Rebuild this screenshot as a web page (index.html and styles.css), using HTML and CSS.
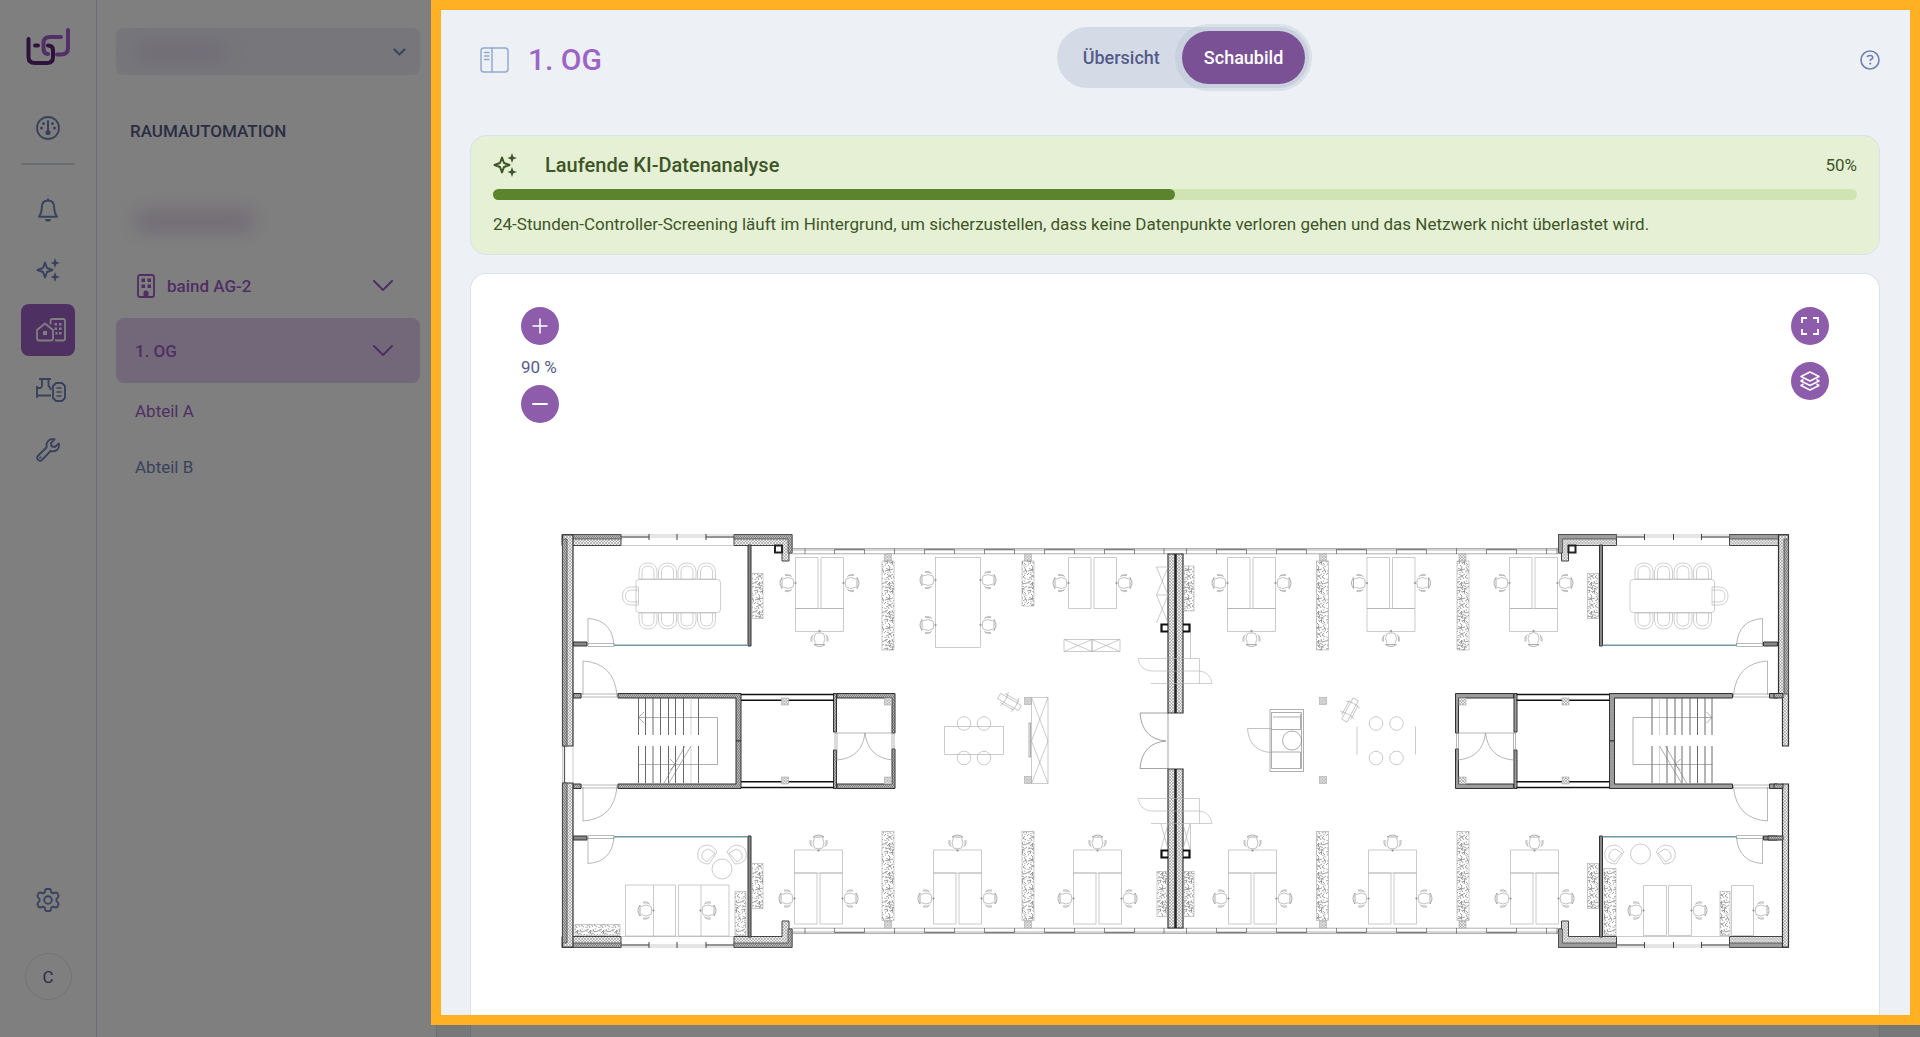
FILE: index.html
```html
<!DOCTYPE html>
<html lang="de">
<head>
  <meta charset="utf-8">
  <title>1. OG - Schaubild</title>
  <link rel="stylesheet" href="styles.css">
</head>
<body>
  <svg class="defs" width="0" height="0">
    <symbol id="sparkles" viewBox="0 0 24 24">
      <path d="M9 4.500 L11 10 L16.500 12 L11 14 L9 19.500 L7 14 L1.500 12 L7 10 Z" fill="none" stroke="currentColor" stroke-width="2" stroke-linejoin="round"/>
      <path d="M19 0 L20.300 3.700 L24 5 L20.300 6.300 L19 10 L17.700 6.300 L14.500 5 L17.700 3.700 Z M19 14 L20.300 17.700 L24 19 L20.300 20.300 L19 24 L17.700 20.300 L14.500 19 L17.700 17.700 Z" fill="currentColor"/>
    </symbol>
    <symbol id="chevron" viewBox="0 0 20 12">
      <path d="M1 1 L10 10 L19 1" fill="none" stroke="currentColor" stroke-width="2" stroke-linecap="round" stroke-linejoin="round"/>
    </symbol>
  </svg>

  <div class="app">
    <nav class="rail">
      <a href="#" class="logo">
        <svg width="44" height="38" viewBox="0 0 44 38" fill="none" stroke-width="4" stroke-linecap="round" stroke-linejoin="round">
          <path stroke="#a45fd0" d="M35 9 H24 Q17.500 9 17.500 15 V20 Q17.500 26 22 26"/>
          <path stroke="#a45fd0" d="M42 2 V20 Q42 26.500 35 26.500 H31"/>
          <path stroke="#5f2478" d="M2.500 11 V29 Q2.500 35 9 35 H21 Q27 35 27 29 V22 Q27 17.500 22 17.500"/>
          <path stroke="#5f2478" d="M9 17.500 H12"/>
        </svg>
      </a>
      <a href="#" class="rail-item" title="Dashboard">
        <svg width="24" height="24" viewBox="0 0 24 24" fill="none" stroke="currentColor" stroke-width="1.800">
          <circle cx="12" cy="12" r="11"/>
          <path d="M12 5 V16" stroke-width="2" stroke-linecap="round"/>
          <g fill="currentColor" stroke="none"><circle cx="12" cy="16.500" r="2.600"/><circle cx="7.500" cy="7.500" r="1.500"/><circle cx="16.500" cy="7.500" r="1.500"/><circle cx="5.500" cy="12" r="1.500"/><circle cx="18.500" cy="12" r="1.500"/></g>
        </svg>
      </a>
      <hr>
      <a href="#" class="rail-item" title="Alarme">
        <svg width="24" height="24" viewBox="0 0 24 24" fill="none" stroke="currentColor" stroke-width="1.900" stroke-linejoin="round">
          <path d="M12 2.500 C7.500 2.500 5.800 6 5.800 9.500 C5.800 14 5 16 3 18.700 H21 C19 16 18.200 14 18.200 9.500 C18.200 6 16.500 2.500 12 2.500 Z M12 0.500 V2.500"/>
          <path d="M9 21 H15 A3 2.600 0 0 1 9 21 Z" fill="currentColor" stroke="none"/>
        </svg>
      </a>
      <a href="#" class="rail-item" title="KI"><svg width="24" height="24"><use href="#sparkles"/></svg></a>
      <a href="#" class="rail-item active" title="Raumautomation">
        <svg class="wide" width="30" height="24" viewBox="0 0 30 24" fill="none" stroke="currentColor" stroke-width="1.800" stroke-linejoin="round">
          <path d="M1 12 L9 5.500 L17 12 V20.500 Q17 22.500 15 22.500 H3 Q1 22.500 1 20.500 Z"/>
          <path d="M14.500 6.500 V3 Q14.500 1 16.500 1 H27 Q29 1 29 3 V20.500 Q29 22.500 27 22.500 H19"/>
          <path d="M7 13 H11 V17 H7 Z M18.500 5 H21 V7.500 H18.500 Z M23 5 H25.500 V7.500 H23 Z M18.500 9.500 H21 V12 H18.500 Z M23 9.500 H25.500 V12 H23 Z M19.500 14 H21.500 V16.500 H19.500 Z M23 14 H25.500 V16.500 H23 Z" fill="currentColor" stroke="none"/>
        </svg>
      </a>
      <a href="#" class="rail-item" title="Anlagen">
        <svg class="wide" width="30" height="24" viewBox="0 0 30 24" fill="none" stroke="currentColor" stroke-width="1.900" stroke-linejoin="round">
          <path d="M3 1 H15 M6 1 V8 L4.500 10 H1 M1 8 V20 M12.500 1 V8 L14.500 10 V12 M1 17.500 H15"/>
          <path d="M20 5 H26 L29 8 V20 L26 23 H20 L17 20 V8 Z"/>
          <path d="M20.500 10 H25.500 M20.500 14 H25.500 M20.500 18 H25.500" stroke-width="1.500"/>
        </svg>
      </a>
      <a href="#" class="rail-item" title="Service">
        <svg width="24" height="24" viewBox="0 0 24 24" fill="none" stroke="currentColor" stroke-width="1.900" stroke-linejoin="round">
          <path d="M22.800 5.500 L18.800 9 L15.500 8.300 L15 5.200 L18.600 1.300 C13.500 0 9.500 4 10.700 9.300 L2 17.800 C-0.500 20.500 3.300 24.600 6 22 L14.500 13 C20 14.500 24 10.500 22.800 5.500 Z"/>
          <path d="M4 19.800 L4.500 19.300" stroke-linecap="round"/>
        </svg>
      </a>
      <a href="#" class="rail-item bottom" title="Einstellungen">
        <svg width="24" height="24" viewBox="0 0 24 24" fill="none" stroke="currentColor" stroke-width="1.900" stroke-linejoin="round">
          <path d="M10.500 1 H13.500 Q15 1 15.200 4.300 L17.200 5.400 Q20 4 21 4.800 L22.500 7.500 Q23 9 20.500 10.800 V13.200 Q23 15 22.500 16.500 L21 19.200 Q20 20 17.200 18.600 L15.200 19.700 Q15 23 13.500 23 H10.500 Q9 23 8.800 19.700 L6.800 18.600 Q4 20 3 19.200 L1.500 16.500 Q1 15 3.500 13.200 V10.800 Q1 9 1.500 7.500 L3 4.800 Q4 4 6.800 5.400 L8.800 4.300 Q9 1 10.500 1 Z"/>
          <circle cx="12" cy="12" r="3.800"/>
        </svg>
      </a>
      <a href="#" class="avatar">C</a>
    </nav>

    <aside class="panel">
      <button class="site-select" aria-label="Standort">
        <span class="redacted"></span>
        <svg width="13" height="8" viewBox="0 0 13 8"><path d="M1.500 1.500 L6.500 6.500 L11.500 1.500" fill="none" stroke="currentColor" stroke-width="2.200" stroke-linecap="round"/></svg>
      </button>
      <h2>RAUMAUTOMATION</h2>
      <div class="tree">
        <a href="#" class="row"><span class="redacted wide"></span></a>
        <a href="#" class="row">
          <svg class="building" width="18" height="24" viewBox="0 0 18 24" fill="currentColor">
            <rect x="1" y="1" width="16" height="22" rx="2" fill="none" stroke="currentColor" stroke-width="1.800"/>
            <path d="M4.500 4.500 H8 V8 H4.500 Z M10.500 4.500 H14 V8 H10.500 Z M4.500 10.500 H8 V14 H4.500 Z M10.500 10.500 H14 V14 H10.500 Z M6.500 23 V18.500 Q6.500 16.500 9 16.500 Q11.500 16.500 11.500 18.500 V23 Z"/>
          </svg>
          <span>baind AG-2</span>
          <svg class="arrow" width="20" height="12"><use href="#chevron"/></svg>
        </a>
        <a href="#" class="row active">
          <span>1. OG</span>
          <svg class="arrow" width="20" height="12"><use href="#chevron"/></svg>
        </a>
        <a href="#" class="sub current">Abteil A</a>
        <a href="#" class="sub">Abteil B</a>
      </div>
    </aside>

    <main>
      <header>
        <div class="heading">
          <svg width="29" height="26" viewBox="0 0 29 26" fill="none" stroke="#93a9cc" stroke-width="1.500" stroke-linecap="round">
            <rect x="1" y="1" width="27" height="24" rx="3"/>
            <path d="M12 1 V25 M4.500 5.500 H9 M4.500 9 H9 M4.500 12.500 H9"/>
          </svg>
          <h1>1. OG</h1>
        </div>
        <div class="toggle">
          <button>Übersicht</button>
          <button class="on">Schaubild</button>
        </div>
        <a href="#" class="help" title="Hilfe">
          <svg width="20" height="20" viewBox="0 0 20 20" fill="none" stroke="currentColor" stroke-width="1.600">
            <circle cx="10" cy="10" r="9"/>
            <path d="M7.300 7.200 Q7.500 5.500 10 5.500 Q12.800 5.500 12.800 7.600 Q12.800 8.700 11.300 9.300 Q10.200 9.800 10.200 11"/>
            <circle cx="10.200" cy="13.600" r=".7" fill="currentColor" stroke-width=".8"/>
          </svg>
        </a>
      </header>

      <section class="analysis">
        <div class="analysis-head">
          <svg width="24" height="24"><use href="#sparkles"/></svg>
          <h3>Laufende KI-Datenanalyse</h3>
          <span>50%</span>
        </div>
        <div class="bar"><div class="fill" style="width:50%"></div></div>
        <p>24-Stunden-Controller-Screening läuft im Hintergrund, um sicherzustellen, dass keine Datenpunkte verloren gehen und das Netzwerk nicht überlastet wird.</p>
      </section>

      <section class="card">
        <div class="controls">
          <div class="zoom">
            <button class="round" aria-label="Vergrößern">
              <svg width="16" height="16" viewBox="0 0 16 16" stroke="#fff" stroke-width="1.500" stroke-linecap="round"><path d="M1 8 H15 M8 1 V15"/></svg>
            </button>
            <span>90 %</span>
            <button class="round" aria-label="Verkleinern">
              <svg width="16" height="16" viewBox="0 0 16 16" stroke="#fff" stroke-width="1.800" stroke-linecap="round"><path d="M1 8 H15"/></svg>
            </button>
          </div>
          <div class="tools">
            <button class="round" aria-label="Vollbild">
              <svg width="18" height="18" viewBox="0 0 18 18" fill="none" stroke="#fff" stroke-width="1.800"><path d="M1 6 V1 H6 M12 1 H17 V6 M17 12 V17 H12 M6 17 H1 V12"/></svg>
            </button>
            <button class="round" aria-label="Ebenen">
              <svg width="20" height="20" viewBox="0 0 20 20" fill="none" stroke="#fff" stroke-width="1.500" stroke-linejoin="round"><path d="M10 1 L19 5.500 L10 10 L1 5.500 Z M3.500 8.500 L1 10 L10 14.500 L19 10 L16.500 8.500 M3.500 13 L1 14.500 L10 19 L19 14.500 L16.500 13"/></svg>
            </button>
          </div>
        </div>

        <svg class="plan" viewBox="559 530 1232 422" fill="none" stroke="#a8a8a8" stroke-width=".6">
          <defs>
            <pattern id="wall" width="3" height="3" patternUnits="userSpaceOnUse">
              <rect width="3" height="3" fill="#eee" stroke="none"/>
              <path d="M0 0 L3 3 M3 0 L0 3" stroke="#888" stroke-width=".5"/>
            </pattern>
            <pattern id="dense" width="2" height="3" patternUnits="userSpaceOnUse">
              <rect width="2" height="3" fill="#bbb" stroke="none"/>
              <path d="M0 3 L2 0" stroke="#555" stroke-width=".7"/>
            </pattern>
            <pattern id="leaves" width="13" height="29" patternUnits="userSpaceOnUse">
              <path stroke="#777" stroke-width=".7" d="M0 3 L4 1 M3 5 L6 2 L5 6 M1 8 L5 7 L7 10 M8 1 L9 4 L13 3 M7 5 L10 7 M9 9 L13 6 M0 11 L4 10 L3 13 M6 12 L9 11 L8 14 M10 12 L12 14 M4 14 L6 16 M5 4 L7 7 L5 9 M9 8 L8 12"/>
              <path stroke="#777" stroke-width=".7" d="M2 17 L5 19 L1 20 M5 19 L6 16 M5 19 L9 18 M5 19 L7 22 M10 16 L12 19 L9 21 M12 19 L13 22 M3 23 L6 25 L2 27 M6 25 L9 23 M6 25 L8 28 M11 24 L9 26 L12 28 M0 24 L2 22 M4 27 L5 29"/>
              <path stroke="#999" stroke-width=".6" d="M2 1 L2 4 M4 4 L8 3 M7 8 L11 10 M1 6 L3 7 M5 11 L7 13 M10 0 L11 2 M2 12 L1 15 M9 14 L13 16 M3 21 L5 22 M10 22 L12 23 M0 28 L3 29"/>
            </pattern>
            <!-- office chair, desk on its right -->
            <g id="chair" stroke="#999">
              <path d="M-5 -4 Q0 -7 5 -4 Q6.500 0 5 4 Q0 7 -5 4 M-3 -7.500 H2 L4 -6 M-3 7.500 H2 L4 6 M-3 -8.500 Q1 -9.500 3 -7 M-3 8.500 Q1 9.500 3 7"/>
              <path d="M-6 -5.500 V5.500 M-6 -5.500 Q-10 0 -6 5.500" stroke-width=".8"/>
              <circle cx="7.500" r=".8" fill="#888"/>
            </g>
            <g id="seat">
              <path d="M-9 8 V0 Q-8 -8 0 -8 Q8 -8 9 0 V8 M-6 8 V1 Q-6 -5 0 -5 Q6 -5 6 1 V8 M-9 8 H9"/>
            </g>
            <g id="armchair">
              <path d="M-9 4 Q-11 -8 0 -9 Q6 -9 10 -2 L2 10 Q-6 10 -9 4 M-5 4 Q-6 -3 1 -5 L8 -1 L0 8 Z"/>
            </g>
            <g id="desks">
              <path d="M0 0 H22.500 V51 H0 Z M25.500 0 H48 V51 H25.500 Z"/>
              <use href="#chair" x="-7.500" y="25.500"/>
              <use href="#chair" transform="translate(55.500 25.500) scale(-1 1)"/>
            </g>
            <g id="team">
              <use href="#desks"/>
              <path d="M0 51 V74 H48 V51 H0"/>
              <use href="#chair" transform="translate(24 81) rotate(-90)"/>
            </g>
            <g id="cross">
              <path d="M0 0 H28 V12 H0 Z M0 0 L28 12 M28 0 L0 12"/>
            </g>
            <rect id="post" width="7" height="7" fill="url(#wall)" stroke="#aaa"/>
            <!-- one corner of the building, mirrored for the other three -->
            <g id="wing">
              <path d="M562 534.500 H621 V545.500 H562 Z M734 534.500 H792 V553 H789 V561 H782 V545.500 H734 Z" fill="url(#wall)" stroke="#444" stroke-width="1"/>
              <path d="M562 534.500 H621 V539 H566 M734 534.500 H792 V553 H788 V539 H734 Z" fill="url(#dense)" stroke="#444" stroke-width=".7"/>
              <path d="M621 535 H734 M621 545.500 H734 M621 537 H734"/>
              <path d="M621 537 H649 M706 537 H734 M649 534 V540 M677 534 V540 M706 534 V540" stroke="#444" stroke-width="1"/>
              <path d="M748 545 H751 V646 H748 Z M573 642 H587 V646 H573 Z" fill="#888" stroke="#333" stroke-width="1"/>
              <path d="M614 645.200 H748" stroke="#6f97a4" stroke-width="1.500"/>
              <path d="M588 645 V618.500 Q612 620 614 645 M588 643.500 H614 V646.500 H588 Z M583 695 V661 Q614 663 617 695 M581 694 H617 V697 H581 Z" stroke="#888"/>
              <path d="M618 693.500 H741 V741 H736 V698 H618 Z M573 693.500 H581 V698 H573 Z M837 693.500 H895 V733 H892 V698 H837 Z M833.500 693.500 H836.500 V732 H833.500 Z" fill="url(#dense)" stroke="#333" stroke-width="1"/>
              <path d="M741 694.500 H834 M741 700.300 H834" stroke="#111" stroke-width="1.600"/>
              <use href="#post" x="781.500" y="698"/>
              <use href="#post" x="884.500" y="698"/>
            </g>
            <rect id="duct" x="775" y="545.500" width="7" height="7" stroke="#222" stroke-width="2"/>
            <!-- facade between the corners -->
            <g id="facade">
              <path d="M792 548.500 H1558 M792 550 H1558 M792 553.800 H1558" stroke="#777"/>
              <path d="M805 548.500 V554 M834.500 554 V549.500 H864.500 V554 M894.500 548.500 V554 M924.500 554 V549.500 H954.500 V554 M984.500 554 V549.500 H1014.500 V554 M1044.500 554 V549.500 H1074.500 V554 M1104.500 554 V549.500 H1134.500 V554 M1164 548.500 V554 M1186.500 548.500 V554 M1216.500 554 V549.500 H1246.500 V554 M1276.500 554 V549.500 H1306.500 V554 M1336.500 554 V549.500 H1366.500 V554 M1396.500 554 V549.500 H1426.500 V554 M1456.500 548.500 V554 M1486.500 554 V549.500 H1516.500 V554 M1546.500 548.500 V554 M1557 548.500 V554" stroke="#444"/>
              <use href="#post" x="884.500" y="554"/>
              <use href="#post" x="1024.500" y="554"/>
              <use href="#post" x="1319.500" y="554"/>
              <use href="#post" x="1459" y="554"/>
              <path d="M1168 554 H1183 V713 H1168 Z" fill="url(#wall)" stroke="#333" stroke-width="1.200"/>
              <path d="M1175.500 554 V713" stroke="#222" stroke-width="2.500"/>
              <path d="M1168 624.500 H1161.500 V631.500 H1168 M1183 624.500 H1189.500 V631.500 H1183" stroke="#111" stroke-width="2.200"/>
            </g>
            <g id="stairs" stroke="#777">
              <path d="M638.500 698 V735 M645.500 698 V735 M653 698 V735 M660.500 698 V735 M668.500 698 V735 M675.500 698 V735 M683.500 698 V735 M698.500 698 V735 M638.500 746 V783 M645.500 746 V783 M653 746 V783 M660.500 746 V783 M668.500 746 V783 M675.500 746 V783 M683.500 746 V783 M698.500 746 V783" stroke="#444" stroke-width=".8"/>
              <path d="M691 698 V735 M691 746 V783" stroke="#bbb"/>
              <path d="M638.500 717.500 H717.500 V764.500 H638 M644 712 L638.500 717.500 L644 723 M670 759 L675.500 764.500 L670 770 M691 746 L669 783 M685 746 L664 783"/>
            </g>
            <g id="liftdoor" stroke="#888">
              <path d="M836 733 H893 M865 733 Q862 758 837 760 M865 733 Q868 758 893 760 M835 733 H837 V760 H835 Z M892 733 H894 V760 H892 Z"/>
            </g>
            <g id="meeting" stroke="#b0b0b0">
              <rect x="636" y="579.500" width="84.500" height="33" rx="3"/>
              <use href="#seat" x="648" y="571"/><use href="#seat" x="667.500" y="571"/><use href="#seat" x="687" y="571"/><use href="#seat" x="706.500" y="571"/>
              <use href="#seat" transform="translate(648 621) scale(1 -1)"/><use href="#seat" transform="translate(667.500 621) scale(1 -1)"/><use href="#seat" transform="translate(687 621) scale(1 -1)"/><use href="#seat" transform="translate(706.500 621) scale(1 -1)"/>
              <use href="#seat" transform="translate(630.500 596) rotate(-90)"/>
            </g>
            <g id="passdoor" stroke="#b0b0b0">
              <path d="M1138 658.500 H1199.500 V683.500 M1151 683.500 H1212 M1151 671 H1199 M1138 658.500 Q1140 670 1151 671 M1199.500 671 Q1210 672 1212 683.500"/>
            </g>
            <g id="easel">
              <path d="M-12 -3 H12 V3 H-12 Z M-8 -5 H8 M-8 5 H8 M-6 -8 Q-3 0 -6 8 M6 -8 Q9 0 6 8"/>
            </g>
          </defs>

          <use href="#wing"/>
          <use href="#wing" transform="translate(2350.500 0) scale(-1 1)"/>
          <use href="#wing" transform="translate(0 1482) scale(1 -1)"/>
          <use href="#wing" transform="translate(2350.500 1482) scale(-1 -1)"/>
          <use href="#duct"/>
          <use href="#duct" transform="translate(2350.500 0) scale(-1 1)"/>
          <use href="#facade"/>
          <use href="#facade" transform="translate(0 1482) scale(1 -1)"/>

          <!-- side walls -->
          <path d="M562.500 535 H573 V746 H562.500 Z M562.500 783 H573 V947 H562.500 Z M1778.500 535 H1788.500 V746 H1782.500 V694 H1778.500 Z M1782.500 784 H1788.500 V947 H1782.500 Z" fill="url(#wall)" stroke="#333" stroke-width="1.200"/>
          <path d="M562.500 539 H567 V746 H562.500 Z M562.500 783 H567 V943 H562.500 Z M1784 539 H1788.500 V694 H1784 Z" fill="url(#dense)" stroke="#444" stroke-width=".8"/>
          <path d="M562.500 746 V783 M573 746 V783"/>
          <path d="M564.500 746 V783" stroke="#555" stroke-width="1.200"/>
          <path d="M1774 693.500 H1783 V698 H1774 Z M1774 784 H1783 V788.500 H1774 Z M1768 836 H1783 V840 H1768 Z" fill="url(#dense)" stroke="#333" stroke-width="1"/>

          <use href="#stairs"/>
          <use href="#stairs" transform="translate(2350.500 0) scale(-1 1)"/>
          <use href="#liftdoor"/>
          <use href="#liftdoor" transform="translate(2350.500 0) scale(-1 1)"/>
          <use href="#meeting"/>
          <use href="#meeting" transform="translate(2350.500 0) scale(-1 1)"/>
          <use href="#passdoor"/>
          <use href="#passdoor" y="140"/>
          <path d="M1168 713 V769 M1140 713 H1168 M1140 713 Q1142 739 1166 741 Q1142 743 1140 768.500 H1168" stroke="#666"/>
          <path d="M1190.500 633 V658 M1161 824 L1168 849 M1168 824 L1161 849 M1183 824 L1190 849 M1190 824 L1183 849 M1190.500 824 V849"/>

          <!-- desks, upper side -->
          <use href="#team" x="795.500" y="557.500"/>
          <use href="#desks" x="1068.500" y="557.500"/>
          <use href="#team" x="1227.500" y="557.500"/>
          <use href="#team" x="1367" y="557.500"/>
          <use href="#team" x="1509.500" y="557.500"/>
          <rect x="935.500" y="557.500" width="45" height="90"/>
          <use href="#chair" x="928" y="580"/>
          <use href="#chair" x="928" y="625"/>
          <use href="#chair" transform="translate(988 580) scale(-1 1)"/>
          <use href="#chair" transform="translate(988 625) scale(-1 1)"/>

          <!-- desks, lower side -->
          <g transform="translate(0 1482) scale(1 -1)">
            <use href="#team" x="794.500" y="558"/>
            <use href="#team" x="933.500" y="558"/>
            <use href="#team" x="1073.500" y="558"/>
            <use href="#team" x="1228.500" y="558"/>
            <use href="#team" x="1368.500" y="558"/>
            <use href="#team" x="1510.500" y="558"/>
          </g>

          <!-- corner offices -->
          <path d="M625.500 885 H675.500 V936 H625.500 Z M653.500 885 V936 M678.500 885 H729 V936 H678.500 Z M701 885 V936 M1643.500 885.500 H1666.500 V935.500 H1643.500 Z M1668.500 885.500 H1691.500 V935.500 H1668.500 Z M1731.500 885.500 H1753.500 V935.500 H1731.500 Z"/>
          <use href="#chair" x="646" y="910.500"/>
          <use href="#chair" transform="translate(708 910.500) scale(-1 1)"/>
          <use href="#chair" x="1636" y="910.500"/>
          <use href="#chair" transform="translate(1699 910.500) scale(-1 1)"/>
          <use href="#chair" transform="translate(1761 910.500) scale(-1 1)"/>
          <use href="#armchair" x="707" y="854"/>
          <use href="#armchair" transform="translate(737 854) scale(-1 1)"/>
          <circle cx="722" cy="869" r="10"/>
          <use href="#armchair" x="1614" y="854"/>
          <use href="#armchair" transform="translate(1666 854) scale(-1 1)"/>
          <circle cx="1640.500" cy="854" r="10"/>

          <!-- lounge areas -->
          <path d="M944.500 726.500 H1003.500 V754.500 H944.500 Z M1357 726.500 V754.500 M1415.500 726.500 V754.500"/>
          <g><circle cx="964" cy="723.500" r="6.800"/><circle cx="984" cy="723.500" r="6.800"/><circle cx="964" cy="758" r="6.800"/><circle cx="984" cy="758" r="6.800"/><circle cx="1376" cy="723.500" r="6.800"/><circle cx="1396.500" cy="723.500" r="6.800"/><circle cx="1376" cy="758" r="6.800"/><circle cx="1396.500" cy="758" r="6.800"/></g>
          <use href="#easel" transform="translate(1009.500 702) rotate(30)"/>
          <use href="#easel" transform="translate(1350 710) rotate(-62)"/>
          <path d="M1031.500 697.500 H1048 V783.500 H1031.500 Z M1031.500 697.500 L1048 741 L1031.500 783.500 M1048 697.500 L1031.500 741 L1048 783.500"/>
          <path d="M1029 723 H1030.500 V757 H1029 Z" stroke="#777"/>
          <use href="#cross" x="1064" y="639.500"/>
          <use href="#cross" x="1092" y="639.500"/>
          <path d="M1168 567 H1156.500 L1168 595 H1156.500 L1168 567 M1156.500 595 L1168 623 M1168 595 L1156.500 623"/>
          <g stroke="#777">
            <path d="M1270 709.500 H1303.500 V771.500 H1270 Z M1271.500 712.500 H1301.500 V768.500 H1271.500 Z M1271.500 729.500 H1300.500 V714 M1273 717 H1300 M1271.500 752 H1300.500 V768"/>
            <circle cx="1292" cy="740.500" r="9.500"/>
            <path d="M1271 728.500 H1247.500 Q1249 751 1271 752.500" stroke="#999"/>
          </g>
          <use href="#post" x="1024.500" y="697.500"/>
          <use href="#post" x="1024.500" y="776.500"/>
          <use href="#post" x="1319.500" y="697.500"/>
          <use href="#post" x="1319.500" y="776.500"/>

          <!-- planters -->
          <g fill="url(#leaves)" stroke="#aaa">
            <rect x="752" y="573.500" width="11" height="45"/>
            <rect x="882" y="561" width="12" height="89"/>
            <rect x="1022" y="561" width="12" height="45"/>
            <rect x="1184" y="566" width="10" height="45"/>
            <rect x="1316.500" y="561" width="12" height="89"/>
            <rect x="1457" y="561" width="12" height="89"/>
            <rect x="1587.500" y="573.500" width="11" height="45"/>
            <rect x="752" y="863.500" width="11" height="45"/>
            <rect x="882" y="831.500" width="12" height="89"/>
            <rect x="1022" y="831.500" width="12" height="89"/>
            <rect x="1157" y="871.500" width="10" height="45"/>
            <rect x="1184" y="871.500" width="10" height="45"/>
            <rect x="1316.500" y="831.500" width="12" height="89"/>
            <rect x="1457" y="831.500" width="12" height="89"/>
            <rect x="1587.500" y="863.500" width="11" height="45"/>
            <rect x="735" y="891.500" width="11" height="44"/>
            <rect x="575" y="924.500" width="45" height="11"/>
            <rect x="1604" y="868.500" width="12" height="67"/>
            <rect x="1720" y="891.500" width="10" height="44"/>
          </g>
        </svg>
      </section>
    </main>
  </div>

  <div class="spotlight"></div>
</body>
</html>
```

FILE: styles.css
```css
* {
  box-sizing: border-box;
}
body {
  margin: 0;
  background: #fff;
  font-family: Roboto, "Liberation Sans", sans-serif;
  font-size: 17px;
  line-height: 24px;
  color: #555b88;
}
a {
  color: inherit;
  text-decoration: none;
}
button {
  border: 0;
  padding: 0;
  font: inherit;
  color: inherit;
  cursor: pointer;
}
h1, h2, h3, p {
  margin: 0;
}
svg {
  display: block;
  flex: none;
}
.defs {
  position: absolute;
}
.app {
  display: flex;
  height: 100vh;
  overflow: hidden;
}

/* icon rail */
.rail {
  width: 97px;
  flex: none;
  display: flex;
  flex-direction: column;
  align-items: center;
  gap: 8px;
  padding: 28px 0 37px;
  border-right: 1px solid #d3dbe8;
  color: #7285bb;
}
.logo {
  margin-bottom: 28px;
}
.rail hr {
  width: 54px;
  height: 2px;
  margin: 1px 0 11px;
  border: 0;
  background: #d3dbe8;
}
.rail-item {
  width: 54px;
  height: 52px;
  display: flex;
  align-items: center;
  justify-content: center;
  border-radius: 8px;
}
.rail-item .wide {
  margin-left: 6px;
}
.rail-item.active {
  background: #9c60c4;
  color: #fff;
}
.rail-item.bottom {
  margin-top: auto;
  margin-bottom: 19px;
}
.avatar {
  width: 47px;
  height: 47px;
  border: 1px solid #e4e6f0;
  border-radius: 50%;
  line-height: 46px;
  text-align: center;
  color: #555b88;
}

/* tree panel */
.panel {
  width: 340px;
  flex: none;
  padding: 28px 16px 0 19px;
  border-right: 1px solid #d3dbe8;
}
.site-select {
  width: 100%;
  height: 47px;
  display: flex;
  align-items: center;
  justify-content: space-between;
  padding: 0 14px 0 20px;
  border-radius: 8px;
  background: #ecedf6;
  color: #768abf;
}
.redacted {
  width: 90px;
  height: 18px;
  border-radius: 8px;
  background: #e2d6ea;
  filter: blur(10px);
}
.redacted.wide {
  width: 120px;
  height: 22px;
}
.panel h2 {
  margin: 44px 0 45px 14px;
  font-size: 17px;
  font-weight: 500;
}
.row {
  height: 65px;
  display: flex;
  align-items: center;
  padding: 0 27px 0 19px;
  border-radius: 8px;
  font-weight: 500;
  color: #a05cc8;
}
.row.active {
  background: #e6d0f2;
}
.building {
  margin: 0 12px 0 2px;
}
.arrow {
  margin-left: auto;
}
.sub {
  display: block;
  padding: 16px 19px;
  color: #7285bb;
}
.sub.current {
  color: #a05cc8;
}

/* content */
main {
  flex: 1;
  min-width: 0;
  display: flex;
  flex-direction: column;
  background: #edf0f5;
  padding: 27px 40px 0 33px;
}
header {
  display: grid;
  grid-template-columns: 1fr auto 1fr;
  align-items: center;
  margin: 0 -16px 47px 0;
}
.heading {
  display: flex;
  align-items: center;
  gap: 19px;
  padding: 4px 0 0 10px;
}
h1 {
  font-size: 30px;
  line-height: 40px;
  font-weight: 500;
  color: #9d64c5;
}
.toggle {
  display: flex;
  padding: 4px;
  border-radius: 31px;
  background: #d4dbe7;
}
.toggle button {
  height: 53px;
  padding: 0 22px;
  border-radius: 27px;
  background: none;
  font-weight: 500;
  font-size: 18px;
}
.toggle .on {
  background: #7b5196;
  color: #fff;
  box-shadow: 0 0 0 7px rgba(167, 180, 196, .25);
}
.help {
  justify-self: end;
  margin-right: 16px;
  padding-top: 4px;
  color: #7080b4;
}
.analysis {
  border: 1px solid #dae2ec;
  border-radius: 16px;
  background: #e6f0d5;
  color: #3d5527;
  padding: 17px 22px 18px;
  margin-bottom: 18px;
}
.analysis-head {
  display: flex;
  align-items: center;
  gap: 28px;
}
.analysis h3 {
  font-size: 20px;
  font-weight: 500;
}
.analysis-head span {
  margin-left: auto;
}
.bar {
  height: 11px;
  margin: 12px 0;
  border-radius: 6px;
  background: #d0e4b3;
}
.fill {
  height: 100%;
  border-radius: 6px;
  background: #5c842f;
}
.card {
  flex: 1;
  border: 1px solid #dae2ec;
  border-bottom: 0;
  border-radius: 16px 16px 0 0;
  background: #fff;
  padding-top: 33px;
}
.controls {
  display: flex;
  justify-content: space-between;
  padding: 0 50px;
}
.zoom,
.tools {
  display: flex;
  flex-direction: column;
}
.zoom span {
  margin: 10px 0 6px;
}
.tools {
  gap: 17px;
}
.round {
  width: 38px;
  height: 38px;
  display: flex;
  align-items: center;
  justify-content: center;
  border-radius: 50%;
  background: #8d5cab;
}
.plan {
  width: 87.5%;
  margin: 107px auto 0;
}

/* tour highlight, dims everything outside of it */
.spotlight {
  position: fixed;
  top: 0;
  right: 0;
  bottom: 12px;
  left: 431px;
  border: 10px solid #ffb023;
  box-shadow: 0 0 0 2000px rgba(0, 0, 0, .5);
  pointer-events: none;
}
```
